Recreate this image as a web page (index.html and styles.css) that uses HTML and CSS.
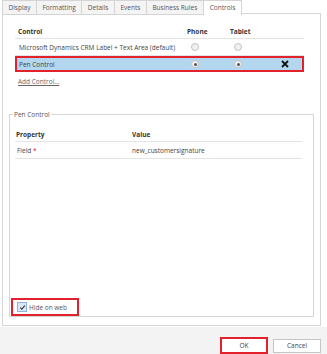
FILE: index.html
```html
<!DOCTYPE html>
<html lang="en">
<head>
  <meta charset="UTF-8" />
  <title>Field Properties - Controls</title>
  <link rel="stylesheet" href="styles.css">
</head>
<body>
  <div class="tabs">
    <div class="tab">Display</div>
    <div class="tab">Formatting</div>
    <div class="tab">Details</div>
    <div class="tab">Events</div>
    <div class="tab">Business Rules</div>
    <div class="tab active">Controls</div>
  </div>

  <div class="panel">
    <div class="grid head">
      <div>Control</div>
      <div>Phone</div>
      <div>Tablet</div>
      <div></div>
    </div>
    <div class="grid row">
      <div>Microsoft Dynamics CRM Label + Text Area (default)</div>
      <div><span class="radio"></span></div>
      <div><span class="radio"></span></div>
      <div></div>
    </div>
    <div class="grid row selected">
      <div>Pen Control</div>
      <div><span class="radio on"></span></div>
      <div><span class="radio on"></span></div>
      <div class="remove">
        <svg width="8" height="8" viewBox="0 0 8 8"><path d="M1 1 L7 7 M7 1 L1 7" stroke="#111" stroke-width="1.8" /></svg>
      </div>
    </div>
    <a class="add" href="#">Add Control...</a>

    <fieldset class="props">
      <legend>Pen Control</legend>
      <div class="pgrid head">
        <div>Property</div>
        <div>Value</div>
      </div>
      <div class="pgrid row">
        <div>Field <span class="req">*</span></div>
        <div>new_customersignature</div>
      </div>
      <div class="spacer"></div>
      <label class="hide">
        <span class="check">
          <svg width="7" height="7" viewBox="0 0 8 8"><path d="M1.5 4.2 L3.2 6 L6.6 1.8" stroke="#333" stroke-width="1.3" fill="none" /></svg>
        </span>
        Hide on web
      </label>
    </fieldset>
  </div>

  <div class="footer">
    <button class="btn ok">OK</button>
    <button class="btn">Cancel</button>
  </div>
</body>
</html>
```

FILE: styles.css
```css
body {
  margin: 0;
  width: 327px;
  height: 354px;
  font-family: 'Open Sans', sans-serif;
  font-size: 6.5px;
  color: #444;
  background: #fff;
  overflow: hidden;
  white-space: nowrap;
}

.tabs {
  display: flex;
  padding-left: 2px;
  height: 14px;
  position: relative;
  z-index: 1;
}

.tab {
  height: 13px;
  line-height: 13px;
  padding: 0 5.5px;
  border: 1px solid #d4d4d4;
  border-left: none;
  background: #f4f4f4;
  color: #555;
}

.tab:first-child {
  border-left: 1px solid #d4d4d4;
}

.tab.active {
  background: #fff;
  height: 14px;
  border-bottom: none;
  padding: 0 6px;
}

.panel {
  margin: -1px 6px 0 2px;
  height: 313px;
  border: 1px solid #d6d6d6;
  padding: 10px 0 0 12px;
  box-sizing: border-box;
}

.grid {
  display: grid;
  grid-template-columns: 169px 43px 50px 27px;
  width: 289px;
  align-items: center;
}

.grid > div {
  padding-left: 3px;
}

.head {
  font-weight: bold;
  color: #333;
  height: 14px;
  border-bottom: 1px solid #e4e4e4;
}

.row {
  height: 16px;
  border-bottom: 1px solid #e4e4e4;
}

.grid.row > div:first-child {
  padding-left: 4px;
}

.selected {
  background: #b2d7ef;
  outline: 2px solid #e3212d;
  outline-offset: -2px;
  border-bottom: none;
  height: 16px;
}

.radio {
  display: block;
  width: 6px;
  height: 6px;
  margin-left: 4px;
  border: 1px solid #c4c4c4;
  border-radius: 50%;
  background: #f0f0f0;
  position: relative;
}

.radio.on::after {
  content: '';
  position: absolute;
  left: 1.5px;
  top: 1.5px;
  width: 3px;
  height: 3px;
  border-radius: 50%;
  background: #555;
}

.remove svg {
  display: block;
  margin-left: 1px;
}

.add {
  display: inline-block;
  margin: 5px 0 0 3px;
  color: #666;
  text-decoration: underline;
}

.props {
  margin: 24px 0 0 -6px;
  width: 305px;
  height: 207px;
  box-sizing: border-box;
  border: 1px solid #d6d6d6;
  padding: 8px 10px 0 5px;
  display: flex;
  flex-direction: column;
}

.props legend {
  padding: 0 1px;
  margin-left: -2px;
  color: #555;
}

.pgrid {
  display: grid;
  grid-template-columns: 116px 1fr;
  width: 287px;
  align-items: center;
}

.pgrid > div {
  padding-left: 1px;
}

.pgrid.row > div:first-child {
  padding-left: 2px;
}

.req {
  color: #e3212d;
}

.spacer {
  flex: 1;
}

.hide {
  display: flex;
  align-items: center;
  gap: 2px;
  width: 60px;
  height: 14px;
  margin-left: -4px;
  padding-left: 4px;
  border: 2px solid #e3212d;
  color: #555;
}

.check {
  display: flex;
  align-items: center;
  justify-content: center;
  width: 8px;
  height: 8px;
  border: 1px solid #8fb3dc;
  background: #dce8f6;
}

.footer {
  display: flex;
  justify-content: flex-end;
  align-items: center;
  gap: 5px;
  height: 28px;
  margin-top: 1px;
  padding: 0 6px 0 0;
  background: #f3f3f3;
}

.btn {
  width: 48px;
  height: 14px;
  padding: 0;
  border: 1px solid #c6c6c6;
  background: #fff;
  font-family: 'Open Sans', sans-serif;
  font-size: 6.5px;
  color: #444;
  margin-top: 9px;
}

.btn.ok {
  height: 17px;
  border: 2px solid #e3212d;
  margin-top: 8px;
}
```
